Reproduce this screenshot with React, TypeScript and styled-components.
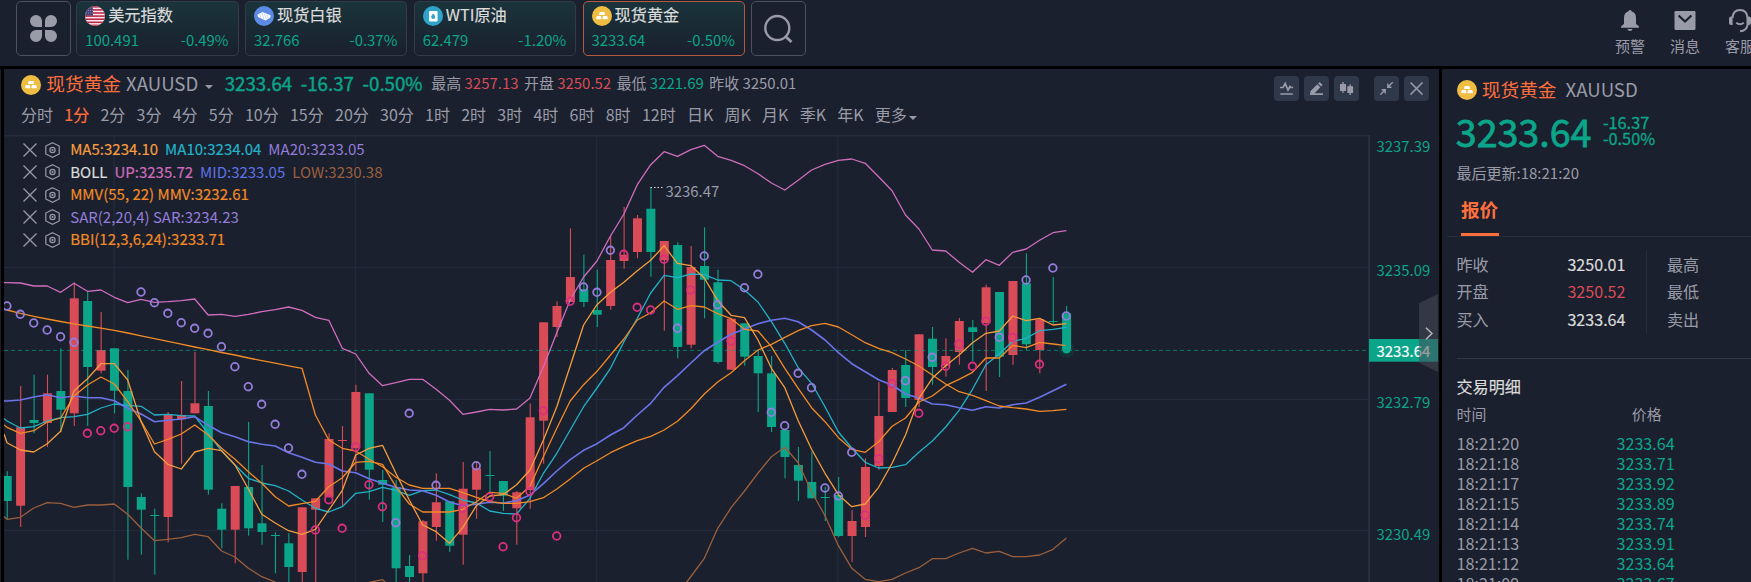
import React from 'react';
import styled, { createGlobalStyle, css } from 'styled-components';

const c = {
  bg: '#1a202d',
  text: '#9a9ba8',
  white: '#dcdcdc',
  green: '#0ba58a',
  red: '#d94b57',
  accent: '#ff6f3d',
  grid: '#222b3b',
};

const semibold = css`
  font-weight: 400;
  -webkit-text-stroke: 0.18px currentColor;
`;

const GlobalStyle = createGlobalStyle`
  *, *::before, *::after { box-sizing: border-box; }
  html, body { margin: 0; padding: 0; background: #000; overflow: hidden; }
  body {
    font-family: "Noto Sans CJK SC", "Noto Sans", sans-serif;
    font-size: 15px;
    color: ${c.text};
  }
`;

type Tone = 'green' | 'red' | 'white' | 'text' | 'accent';

const Page = styled.div`
  width: 1751px;
  height: 582px;
  display: flex;
  flex-direction: column;
  gap: 3px;
  overflow: hidden;
  background: #000;
`;

const TopBar = styled.header`
  height: 66px;
  flex: none;
  background: ${c.bg};
  display: flex;
  align-items: flex-start;
  padding: 1px 0 0 16px;
`;

const SquareButton = styled.button`
  width: 55px;
  height: 55px;
  flex: none;
  padding: 0;
  display: grid;
  place-items: center;
  border: 1px solid #4c515f;
  border-radius: 5px;
  background: transparent;
  color: ${c.text};
`;

const QuoteList = styled.div`
  display: flex;
  gap: 6.4px;
  margin: 0 6px 0 5.2px;
`;

const QuoteCard = styled.div<{ $active?: boolean }>`
  width: 162.4px;
  height: 55px;
  padding: 0 9px 0 8px;
  border: 1px solid ${(p) => (p.$active ? '#b25b3f' : '#333b48')};
  border-radius: 5px;
  background: linear-gradient(#1a343b, #1a202d);
`;

const CardHead = styled.div`
  height: 24px;
  display: flex;
  align-items: center;
  gap: 3px;
  font-size: 16.2px;
  line-height: 24px;
  color: ${c.white};
  ${semibold}
  svg { margin-top: 4px; }
`;

const CardFoot = styled.div`
  display: flex;
  justify-content: space-between;
  font-size: 14.9px;
  line-height: 22px;
  margin-top: 3px;
  color: ${c.green};
`;

const TopActions = styled.nav`
  display: flex;
  margin-left: auto;
  margin-right: -4px;
  gap: 25px;
  padding-top: 8px;
`;

const TopAction = styled.div`
  width: 30px;
  display: flex;
  flex-direction: column;
  align-items: center;
  font-size: 15px;
  line-height: 22px;
  white-space: nowrap;
  svg { display: block; height: 24px; margin-bottom: 2px; overflow: visible; }
`;

const Body = styled.main`
  flex: 1;
  min-height: 0;
  display: flex;
  gap: 3px;
`;

const EdgeStrip = styled.div`
  width: 1px;
  background: ${c.bg};
`;

const ChartPanel = styled.section`
  width: 1435px;
  flex: none;
  background: ${c.bg};
  display: flex;
  flex-direction: column;
`;

const TitleRow = styled.div`
  height: 27px;
  flex: none;
  padding: 0 10px 0 17px;
  display: flex;
  align-items: center;
  white-space: nowrap;
  & > svg { flex: none; margin-top: 5px; }
`;

const SymbolName = styled.span`
  font-size: 18.7px;
  line-height: 28px;
  color: ${c.accent};
  margin-left: 5.3px;
`;

const SymbolCode = styled.span<{ $gap: number }>`
  font-size: 18.6px;
  line-height: 28px;
  margin-left: ${(p) => p.$gap}px;
`;

const Caret = styled.i<{ $gap: number; $drop: number }>`
  display: inline-block;
  vertical-align: middle;
  margin: ${(p) => p.$drop}px 0 0 ${(p) => p.$gap}px;
  border: 4px solid transparent;
  border-top-color: currentColor;
  border-bottom: 0;
`;

const LastPrice = styled.span`
  display: flex;
  gap: 8.6px;
  margin-left: 12px;
  font-size: 18.7px;
  line-height: 28px;
  color: ${c.green};
  font-weight: 400;
  -webkit-text-stroke: 0.4px currentColor;
`;

const StatLine = styled.span`
  display: flex;
  gap: 5.5px;
  margin-left: 8.8px;
  padding-top: 1px;
  font-size: 14.95px;
  line-height: 28px;
`;

const Num = styled.span<{ $tone: Tone }>`
  color: ${(p) => c[p.$tone]};
`;

const Tools = styled.div`
  display: flex;
  gap: 5px;
  margin-left: auto;
  padding-top: 12px;
`;

const ToolButton = styled.button<{ $apart?: boolean }>`
  width: 25px;
  height: 25px;
  padding: 0;
  border: 0;
  border-radius: 4px;
  background: #2f394a;
  color: ${c.text};
  display: grid;
  place-items: center;
  margin-left: ${(p) => (p.$apart ? 10 : 0)}px;
`;

const Periods = styled.div`
  height: 39px;
  flex: none;
  display: flex;
  align-items: center;
  gap: 11.25px;
  padding: 0 0 3px 17px;
  font-size: 16px;
  line-height: 24px;
  white-space: nowrap;
`;

const Period = styled.span<{ $active?: boolean }>`
  color: ${(p) => (p.$active ? c.accent : c.text)};
  ${(p) => p.$active && semibold}
`;

const ChartArea = styled.div`
  position: relative;
  flex: 1;
  min-height: 0;
  overflow: hidden;
  & > svg { display: block; }
`;

const Legend = styled.div`
  position: absolute;
  left: 19px;
  top: 3px;
  display: flex;
  flex-direction: column;
`;

const LegendRow = styled.div`
  height: 22.5px;
  display: flex;
  align-items: center;
  font-size: 15px;
  line-height: 22px;
  white-space: pre;
  svg { flex: none; margin-top: 1px; }
  svg + svg { margin-left: 8px; margin-right: 10.2px; }
`;

const LegendItem = styled.span<{ $color: string; $strong?: boolean }>`
  color: ${(p) => p.$color};
  ${(p) => p.$strong && semibold}
  margin-right: 7px;
`;

const CollapseHandle = styled.div`
  position: absolute;
  right: 1px;
  top: 159px;
  width: 19px;
  height: 78px;
  display: grid;
  place-items: center;
  background: rgba(72, 76, 89, 0.55);
  clip-path: polygon(0 12%, 100% 0, 100% 100%, 0 88%);
  color: #b5b7c0;
`;

const SidePanel = styled.aside`
  flex: 1;
  min-width: 0;
  overflow: hidden;
  background: ${c.bg};
  display: flex;
  flex-direction: column;
  white-space: nowrap;
`;

const SideTitle = styled.div`
  display: flex;
  align-items: center;
  height: 30px;
  padding-left: 14.5px;
  margin-top: 6px;
  svg { margin-top: 2px; }
`;

const SidePrice = styled.div`
  display: flex;
  align-items: center;
  height: 48px;
  margin-top: 4px;
  padding-left: 13.8px;
  color: ${c.green};
  font-size: 37.6px;
  line-height: 48px;
  font-weight: 400;
  -webkit-text-stroke: 0.8px currentColor;
`;

const SideChange = styled.div`
  display: flex;
  flex-direction: column;
  margin: 0 0 3px 11.5px;
  font-size: 16.3px;
  line-height: 16px;
  font-weight: 400;
  -webkit-text-stroke: 0.3px currentColor;
`;

const Updated = styled.div`
  font-size: 15px;
  line-height: 24px;
  padding-left: 14.5px;
  margin-top: 6px;
`;

const TabBar = styled.div`
  margin: 8px 0 0 5px;
  height: 44px;
  padding-left: 14px;
  border-bottom: 1px solid #272e3b;
`;

const Tab = styled.div`
  width: 38px;
  height: 43px;
  font-size: 18.6px;
  font-weight: 700;
  line-height: 31px;
  color: ${c.accent};
  border-bottom: 3px solid ${c.accent};
`;

const Facts = styled.div`
  display: flex;
  margin: 14px 0 25px 14.5px;
  height: 83px;
  font-size: 16.1px;
`;

const FactColumn = styled.div<{ $divided?: boolean }>`
  width: ${(p) => (p.$divided ? 190 : 180)}px;
  flex: none;
  padding: 0 20px 0 0;
  border-right: ${(p) => (p.$divided ? '1.5px solid #272e3b' : '0')};
  margin-right: 20.5px;
`;

const Fact = styled.div`
  display: flex;
  justify-content: space-between;
  height: 27.4px;
  line-height: 27.4px;
`;

const FactValue = styled.span<{ $tone: Tone }>`
  color: ${(p) => c[p.$tone]};
  ${(p) => p.$tone === 'white' && semibold}
`;

const Trades = styled.div`
  flex: 1;
  margin-left: 14.5px;
  border-top: 1px solid #2f394a;
`;

const TradesTitle = styled.h3`
  margin: 14px 0 0;
  font-size: 16.1px;
  line-height: 26px;
  color: ${c.white};
  ${semibold}
`;

const TradeHead = styled.div`
  display: flex;
  font-size: 14.9px;
  line-height: 26px;
  margin: 2px 0 6px;
  span:last-child { margin-left: 145.5px; }
`;

const TradeRow = styled.div`
  display: grid;
  grid-template-columns: 160px 1fr;
  height: 20px;
  line-height: 20px;
  font-size: 16.15px;
`;

/* ---------- icons ---------- */

const GoldIcon = () => (
  <svg width="20" height="20" viewBox="0 0 20 20">
    <circle cx="10" cy="10" r="10" fill="#efbd42" />
    <path
      d="M8.3 6h3.6q.6 0 .7.5l.4 1.9q.1.7-.6.7H7.7q-.7 0-.6-.7l.4-1.9q.1-.5.8-.5zM5.3 10h3q.6 0 .7.5l.4 2.1q.1.7-.6.7H4.7q-.6 0-.5-.7l.4-2.1q.1-.5.7-.5zM11.5 10h3.2q.6 0 .7.5l.4 2.1q.1.7-.6.7h-4.3q-.6 0-.5-.7l.4-2.1q.1-.5.7-.5z"
      fill="#fff"
    />
  </svg>
);

const SilverIcon = () => (
  <svg width="20" height="20" viewBox="0 0 20 20">
    <circle cx="10" cy="10" r="10" fill="#5c8ae4" />
    <path d="M3.500 8.500 8.500 6l8 3.200-.3 2.600L11.500 14.500 4 11z" fill="#fff" />
    <path d="m5.500 8 1.500 4M8 7l2 6.500M10.500 7.500l2 6M13 8.500l1.500 4" stroke="#9dbaf0" strokeWidth=".6" fill="none" />
  </svg>
);

const OilIcon = () => (
  <svg width="20" height="20" viewBox="0 0 20 20">
    <circle cx="10" cy="10" r="10" fill="#2fa3c9" />
    <rect x="6" y="5" width="8.6" height="10.6" rx="1" fill="#fff" />
    <path d="M10.200 7.500q2 2.300 2 3.600a2 2 0 0 1-4 0q0-1.300 2-3.600z" fill="#2fa3c9" />
  </svg>
);

const FlagIcon = () => (
  <svg width="20" height="20" viewBox="0 0 20 20">
    <defs>
      <clipPath id="flagClip">
        <circle cx="10" cy="10" r="10" />
      </clipPath>
    </defs>
    <g clipPath="url(#flagClip)">
      <rect width="20" height="20" fill="#f3e9ee" />
      {[0, 3.1, 6.2, 9.3, 12.4, 15.5, 18.6].map((y) => (
        <rect key={y} y={y} width="20" height="1.6" fill="#c22846" />
      ))}
      <rect width="8" height="9.6" fill="#474478" />
      {[2, 4.5, 7].map((y) => (
        <path key={y} d={`M1 ${y}h7`} stroke="#9a99bd" strokeWidth=".7" strokeDasharray="1 1" />
      ))}
    </g>
  </svg>
);

const CloverIcon = () => (
  <svg width="27" height="27" viewBox="0 0 27 27" fill="currentColor">
    <path d="M6 0a6 6 0 0 1 6 6v6H6A6 6 0 0 1 6 0zM21 0a6 6 0 0 1 0 12h-6V6a6 6 0 0 1 6-6zM6 15h6v6a6 6 0 1 1-6-6zM15 15h6a6 6 0 1 1-6 6z" />
  </svg>
);

const SearchIcon = () => (
  <svg width="30" height="30" viewBox="0 0 30 30" fill="none" stroke="currentColor" strokeWidth="2.4">
    <circle cx="14.300" cy="14" r="12" />
    <path d="m22 22 6.500 6" strokeWidth="2.800" />
  </svg>
);

const BellIcon = () => (
  <svg width="20" height="24" viewBox="0 0 20 24" fill="currentColor">
    <path d="M10 1q1.200 0 1.500 1.300Q16 3.600 16 9v6l2.900 2.300V18.700H1.100V17.300L4 15V9q0-5.400 4.500-6.700Q8.800 1 10 1zM7.400 20h5.200q-.5 2-2.600 2t-2.600-2z" />
  </svg>
);

const MailIcon = () => (
  <svg width="22" height="24" viewBox="0 0 22 24">
    <rect x=".5" y="2" width="21" height="19" rx="1.200" fill="currentColor" />
    <path d="m4.600 6.500 6.400 6 6.400-6" stroke={c.bg} strokeWidth="2.200" fill="none" />
  </svg>
);

const HeadsetIcon = () => (
  <svg width="24" height="24" viewBox="0 0 24 24" fill="none" stroke="currentColor" strokeWidth="2">
    <path d="M4.500 9Q5 1 12 1t7.500 8v7q-1 6-7.500 6.300" />
    <path d="M4.600 7.500v8.600H3A2.200 2.200 0 0 1 1 14V9.600a2 2 0 0 1 2-2zM19.500 7.500v8.600H21a2.200 2.200 0 0 0 2-2.100V9.600a2 2 0 0 0-2-2z" fill="currentColor" stroke="none" />
    <path d="M8.300 13.800q3.700 3 7.500 0" />
  </svg>
);

const PulseToolIcon = () => (
  <svg width="15" height="15" viewBox="0 0 15 15" fill="none" stroke="currentColor" strokeWidth="1.700">
    <path d="M1 6.500h3L6.200 2.500 9 9l2-3.500 1 1h2M1.300 13h12.500" />
  </svg>
);

const PencilToolIcon = () => (
  <svg width="15" height="15" viewBox="0 0 15 15" fill="currentColor">
    <path d="M1 13.200 1.600 10 8.300 3.300l3 3L5.700 12.300H14V14H1zM9.100 2.500 10.700.900l3 3-1.600 1.600z" />
  </svg>
);

const CandleToolIcon = () => (
  <svg width="15" height="15" viewBox="0 0 15 15" fill="currentColor">
    <path d="M1 3h2.300V1h1.400v2H7v7H4.700v1.800H3.300V10H1zM8.300 5.300h2.200V3.500h1.400v1.800h2.200v6.600h-2.200v2h-1.400v-2H8.300z" />
  </svg>
);

const ShrinkToolIcon = () => (
  <svg width="15" height="15" viewBox="0 0 15 15" fill="none" stroke="currentColor" strokeWidth="1.400">
    <path d="M13.700 1.300 9 6M8.800 2.600v3.600h3.600M1.300 13.700 6 9M6.200 12.400V8.800H2.600" />
  </svg>
);

const CloseIcon = ({ size = 14, weight = 1.3 }: { size?: number; weight?: number }) => (
  <svg width={size} height={size} viewBox="0 0 14 14" fill="none" stroke="currentColor" strokeWidth={weight}>
    <path d="M.500.500l13 13M13.500.500l-13 13" />
  </svg>
);

const HexIcon = () => (
  <svg width="15" height="16" viewBox="0 0 15 16" fill="none" stroke="currentColor" strokeWidth="1.200">
    <path d="M7.500.700 14.200 4v8l-6.700 3.300L.800 12V4z" />
    <circle cx="7.500" cy="8" r="2.600" />
    <circle cx="7.500" cy="8" r=".5" />
  </svg>
);

/* ---------- chart data ---------- */

const STEP = 13.41;
const X0 = 7.2;
const xAt = (i: number) => X0 + STEP * i;

// [direction (1 rise, 0 fall), high, body top, body bottom, low]
const candles: number[][] = [
  [0, 471.3, 476, 501, 519], [1, 386, 427.3, 505.7, 527], [0, 374.7, 420, 423, 433.3], [1, 374.7, 393.3, 423, 447],
  [0, 348.3, 391, 409.7, 432.3], [1, 282.3, 298.3, 413.3, 426], [0, 291.7, 301, 367, 426], [1, 312, 350, 370.7, 373.3],
  [0, 348.3, 348.3, 390.7, 413.3], [0, 370, 391, 487, 559.7], [0, 493.3, 497, 509.7, 554.7], [0, 508.7, 515, 516, 574.7],
  [1, 412, 414, 517, 542.3], [1, 381, 415, 419.3, 463.7], [1, 352, 403.3, 413.3, 413.3], [0, 391, 406, 489.7, 494.7],
  [0, 503.3, 508.7, 529.7, 548.3], [1, 486, 486, 529.7, 563.3], [0, 422, 487, 528.3, 535.7], [0, 465, 523.3, 532, 544.7],
  [0, 532.3, 535, 536, 573.3], [0, 533, 543.3, 567, 585], [1, 507.3, 507.3, 572, 585], [1, 498.3, 498.3, 509.7, 585],
  [1, 433.3, 439, 497.3, 497.3], [1, 426, 440, 441, 505.7], [1, 384.7, 392, 448.3, 471], [0, 393.3, 393.3, 469.7, 499.7],
  [0, 470, 480, 484.7, 522], [0, 480, 487.3, 568.3, 585], [0, 555, 566, 577, 585], [1, 520, 521.3, 573.3, 585],
  [1, 473.3, 502.3, 527, 540.7], [0, 501.3, 501.3, 545.7, 552], [1, 462, 488.7, 534.7, 564.7], [1, 462, 468.3, 489.7, 518.7],
  [0, 451, 475, 476, 493.3], [0, 481, 481, 495.7, 511], [1, 491, 492.3, 508.3, 544.7], [1, 403.3, 417.3, 490, 508.7],
  [1, 322.3, 322.3, 420.7, 463.7], [1, 301.3, 306, 327, 337], [1, 228.3, 277, 302, 302], [0, 254.7, 289.3, 302, 307],
  [0, 269.7, 310, 314.7, 327], [1, 235.3, 260, 306, 309.7], [1, 207, 254.7, 261, 268.7], [1, 215, 218.3, 252, 258.3],
  [0, 187.3, 208.7, 252, 276.7], [1, 241, 241, 260.3, 330.7], [0, 242.3, 245, 347, 358.3], [1, 246, 267, 344.7, 348.3],
  [0, 227.3, 266, 279.7, 318.3], [0, 269.7, 282.3, 362, 363.7], [1, 318.7, 318.7, 369.7, 369.7], [0, 323.3, 323.3, 356.7, 365.7],
  [0, 350, 356, 373.3, 412], [0, 356, 373.3, 427, 432], [0, 430, 430, 457, 478.3], [0, 447, 465, 480.7, 501],
  [0, 451.7, 482, 498.3, 498.3], [0, 486.7, 497, 498, 521], [0, 477, 495, 536, 537.3], [1, 510, 521, 536, 562],
  [1, 458.3, 467, 527, 537], [1, 382, 416, 466, 469.7], [1, 368, 370, 412, 412], [0, 350, 365, 398, 407],
  [1, 334.3, 334.3, 400, 407], [0, 327, 338.7, 367, 384.7], [1, 338.3, 356, 365.7, 376.7], [1, 318, 321, 352, 364.7],
  [0, 320, 327.3, 332, 361], [1, 284.7, 287.3, 323, 391], [0, 292, 292, 356.7, 377], [1, 281, 281, 355, 364.7],
  [0, 253.3, 283.3, 344.3, 350], [1, 319.3, 319.3, 350, 373.3], [0, 277, 321, 322, 324], [0, 306, 313.3, 350, 350],
];

const upper = [
  282.7, 283, 286, 286, 292.3, 283.3, 291.3, 290, 297.3, 302.7, 299.3, 302.3, 301.7, 300.7, 299, 315, 314.3, 316.3, 314.3, 311.7,
  309.7, 307, 310.3, 317.3, 320.3, 348.3, 354, 373.3, 385.7, 382.7, 379.3, 379.3, 389.3, 400.3, 414.3, 412, 409.3, 410, 409, 398,
  366.7, 332.7, 300, 277, 261, 236, 214, 184.7, 164.7, 151.7, 156.3, 149.7, 145.3, 156.3, 160.3, 165.7, 173.7, 183, 190, 180.3,
  170, 164.3, 160.3, 159, 163.3, 176.7, 190.7, 215, 229, 250, 251, 262.3, 272.3, 259.7, 265.3, 252.3, 249, 240.3, 232.7, 230.7,
];

const middle = [
  401, 400, 397, 394.7, 397.7, 396, 397.7, 397.7, 400.7, 408.3, 414, 421.7, 420.3, 419, 416.7, 425.3, 432.7, 436.7, 441.7, 444.3,
  446, 452.7, 457.3, 462.3, 464, 471, 472.7, 478.7, 483.3, 487.3, 490, 490.7, 495.3, 502, 505.7, 504.3, 502.3, 503, 500.7, 495,
  483.7, 471, 459.7, 450.3, 443.7, 435, 427.7, 415, 403.3, 387.3, 375.7, 363, 350.7, 342.3, 334.3, 329, 323.7, 320.3, 318.3, 321.7,
  330, 340, 352.7, 363.7, 371.7, 379.7, 385, 394, 398, 404, 404.7, 407.7, 410.3, 406.7, 408, 404.7, 403, 397.3, 390.7, 384.3,
];

const lower = [
  519.3, 517.3, 508, 502.7, 503.3, 507.3, 505, 505, 504, 514.3, 528, 540.7, 539.3, 537.7, 534.3, 536.7, 551, 557, 568.3, 576.7,
  582, 590, 600, 600, 600, 600, 595, 582.5, 579.7, 592, 610, 610, 610, 610, 610, 610, 610, 610, 610, 610,
  610, 610, 610, 610, 610, 610, 610, 610, 610, 610, 594, 576.5, 558.3, 528.3, 507.7, 491, 473, 456.7, 447.3, 462.7,
  491.7, 515.7, 545.7, 568.3, 579.3, 581.7, 579.3, 573, 567.7, 558.7, 558.7, 553, 548.3, 553, 551.3, 556.7, 556.7, 555, 549.3, 538,
];

const ma10 = [
  421, 428, 426.7, 421, 417.7, 416.7, 414.3, 408, 404, 405.3, 406.3, 415, 414.3, 415.7, 416, 433.3, 451, 465, 478.3, 483,
  485.7, 491, 500, 508.3, 512, 506.7, 493.3, 491.7, 487.3, 490.3, 495.3, 490.7, 490, 494.7, 500, 503, 511, 513.3, 514, 498.3,
  473.3, 453.3, 430, 406.7, 388, 368.3, 341.7, 318.3, 293, 275.3, 277.7, 274, 274.7, 280, 280.7, 290, 302, 321.7, 343.3, 367.7,
  383.3, 406.7, 432, 448, 462.3, 468, 467.3, 464.7, 452.3, 441, 427, 410.3, 389.3, 364.7, 354, 341.3, 338.3, 330.7, 329.3, 327.3,
];

const ma5 = [
  442.7, 450, 452, 443.7, 431.3, 390.7, 378.7, 363.7, 363.7, 380, 421.7, 451.7, 464.3, 469, 452, 448.3, 450.7, 465, 489, 514.3,
  523, 530.7, 534.3, 529.3, 510, 490.3, 455, 448.3, 445.3, 473.3, 500, 525, 531.7, 543.3, 527.3, 505.7, 496, 494.7, 484.7, 470,
  440, 406.7, 366, 325, 304.7, 292.3, 282.3, 270.7, 260.3, 245.7, 263.3, 265.7, 278, 300.7, 315.3, 317.7, 340, 368.3, 387.7, 420.7,
  449.3, 473.3, 494.7, 506.7, 504, 487.3, 463.3, 435, 398.3, 378.3, 365.7, 355, 342.7, 333.3, 331, 316, 320.7, 318.3, 325, 323.7,
];

const bbi = [
  427.3, 433.3, 430.7, 422, 418, 396, 385, 377, 384, 401.7, 421, 444, 439.3, 434, 425, 435, 448.3, 459.3, 471.7, 483.3,
  496.7, 506, 503.7, 501.3, 486.7, 477.7, 462.3, 461.3, 464.3, 486.7, 504, 512, 512, 512, 509.3, 501.7, 492.3, 493.3, 498.3, 486.3,
  456.7, 428.3, 401, 384.7, 371.3, 355, 339, 320, 312.7, 301, 309.3, 305.7, 307, 313.7, 318.7, 329.3, 331, 346.7, 368.3, 388.3,
  407.7, 421.7, 437.7, 449.3, 452.3, 441.7, 426.3, 418, 402, 396, 385.7, 379.3, 372.3, 358, 358, 345.3, 347.7, 342.3, 344, 345.7,
];

const mmv = [
  310, 313.3, 316.3, 319, 321.5, 323.8, 326, 328.2, 330.3, 333, 335.8, 338.6, 341.4, 344.2, 347, 349.7, 352.5, 355, 358, 360.6,
  363.2, 365.8, 368.3, 415, 440, 448.3, 451, 459.3, 466.7, 477.3, 485, 488.3, 488.3, 488.3, 492.7, 497.3, 501.7, 503.3, 503.3, 501.7,
  497.7, 489, 479, 468.3, 460.7, 452.7, 446.3, 440.7, 436.3, 430, 421.3, 408.7, 394, 382, 372.7, 360.7, 350, 344.3, 337.3, 330.7,
  325.7, 323.3, 327, 334.7, 342.7, 348.3, 352.7, 359, 366, 375, 384, 391.7, 395.3, 400.7, 406, 407.7, 409, 411.3, 410.7, 409.3,
];

const sarAbove: number[][] = [
  [0, 306], [1, 314.3], [2, 323], [3, 330], [4, 336.7], [5, 342.3], [10, 292], [11, 302.7], [12, 313.3], [13, 322.7], [14, 328.3],
  [15, 333.3], [16, 346.7], [17, 366.7], [18, 386.7], [19, 404.3], [20, 424.3], [21, 448], [22, 474.3], [29, 522.7], [30, 413.3],
  [32, 485.3], [35, 465.7], [43, 287], [44, 292.3], [45, 250.3], [50, 328.3], [52, 256], [53, 304.7], [55, 287.7], [56, 274.3],
  [57, 412.3], [58, 425.7], [59, 373.3], [60, 387.7], [61, 488], [62, 496], [63, 452.3], [67, 380.7], [69, 357.3], [74, 337.3],
  [76, 280], [78, 268], [79, 316],
];

const sarBelow: number[][] = [
  [6, 433.3], [7, 430.7], [8, 428.3], [9, 426.7], [23, 530], [24, 499.7], [25, 528.3], [26, 447], [27, 484.7], [28, 506.7],
  [31, 555.7], [34, 508.3], [36, 497], [37, 546.7], [38, 517.7], [39, 491.3], [40, 410.7], [41, 536], [42, 301.3], [46, 254.3],
  [47, 307.3], [48, 310], [49, 259.3], [51, 290], [54, 341], [64, 515], [65, 458.7], [66, 383.7], [68, 413.3], [70, 366.3],
  [71, 344], [72, 366.3], [73, 321.3], [75, 337.3], [77, 364.3],
];

const series = [
  { data: upper, color: '#cf6dbd', width: 1.3, lead: 282.7 },
  { data: lower, color: '#9b5f3d', width: 1.3, lead: 516.5 },
  { data: ma10, color: '#22b3c9', width: 1.3, lead: 418.5 },
  { data: middle, color: '#6c74ea', width: 1.6, lead: 401 },
  { data: mmv, color: '#f28a26', width: 1.3, lead: 309 },
  { data: bbi, color: '#f28a26', width: 1.3, lead: 425 },
  { data: ma5, color: '#f59d3e', width: 1.3, lead: 434 },
];

const axis = [
  { y: 147, label: '3237.39' },
  { y: 271, label: '3235.09' },
  { y: 403, label: '3232.79' },
  { y: 535, label: '3230.49' },
];

const Chart = () => (
  <svg width="1435" height="447" viewBox="4 135 1435 447" fontFamily='"Noto Sans CJK SC", sans-serif' fontSize="14.9">
    <g fill={c.grid}>
      <rect x="4" y="135" width="1366" height="1.600" />
      {[267, 399, 530].map((y) => (
        <rect key={y} x="4" y={y} width="1365" height="1" />
      ))}
      {[113.4, 354.6, 596, 837].map((x) => (
        <rect key={x} x={x} y="136" width="1.400" height="446" />
      ))}
      <rect x="1368" y="135" width="2" height="447" fill="#262f40" />
    </g>
    <g>
      {candles.map(([up, high, top, bottom, low], i) => (
        <g key={i} fill={up ? c.red : c.green}>
          <rect x={xAt(i) - 0.5} y={high} width="1.100" height={low - high} />
          <rect x={xAt(i) - 4.5} y={top} width="9" height={bottom - top} />
        </g>
      ))}
    </g>
    <path d="M4 350.400H1369" stroke={c.green} strokeOpacity=".65" strokeDasharray="4 3" />
    <g fill="none" strokeLinejoin="round">
      {series.map((s, k) => (
        <polyline
          key={k}
          stroke={s.color}
          strokeWidth={s.width}
          points={`4,${s.lead} ` + s.data.map((y, i) => `${(xAt(i) - 0.2).toFixed(1)},${y}`).join(' ')}
        />
      ))}
    </g>
    <g fill="none" strokeWidth="1.800">
      {sarAbove.map(([i, y]) => (
        <circle key={i} cx={xAt(i) - 0.3} cy={y} r="3.800" stroke="#957ddb" />
      ))}
      {sarBelow.map(([i, y]) => (
        <circle key={i} cx={xAt(i) - 0.3} cy={y} r="3.800" stroke="#dc2f80" />
      ))}
    </g>
    <circle cx="1066.500" cy="350" r="8" fill={c.green} opacity=".12" />
    <circle cx="1066.500" cy="349.500" r="4" fill={c.green} />
    <path d="M650.500 187.500h14" stroke="#dcdcdc" strokeDasharray="1.500 2" />
    <text x="665.500" y="197" fill={c.text}>3236.47</text>
    {axis.map((a) => (
      <text key={a.label} x="1376.500" y={a.y + 5.3} fill={c.green}>
        {a.label}
      </text>
    ))}
    <rect x="1369" y="339" width="69" height="22.700" fill={c.green} />
    <text x="1376.500" y="357" fill="#fff" stroke="#fff" strokeWidth=".2">3233.64</text>
  </svg>
);

/* ---------- page ---------- */

const quotes = [
  { name: '美元指数', price: '100.491', change: '-0.49%', icon: <FlagIcon /> },
  { name: '现货白银', price: '32.766', change: '-0.37%', icon: <SilverIcon /> },
  { name: 'WTI原油', price: '62.479', change: '-1.20%', icon: <OilIcon /> },
  { name: '现货黄金', price: '3233.64', change: '-0.50%', icon: <GoldIcon />, active: true },
];

const periods = [
  '分时', '1分', '2分', '3分', '4分', '5分', '10分', '15分', '20分', '30分', '1时', '2时', '3时', '4时', '6时', '8时', '12时',
  '日K', '周K', '月K', '季K', '年K',
];

const stats: { label: string; value: string; tone: Tone }[] = [
  { label: '最高', value: '3257.13', tone: 'red' },
  { label: '开盘', value: '3250.52', tone: 'red' },
  { label: '最低', value: '3221.69', tone: 'green' },
  { label: '昨收', value: '3250.01', tone: 'text' },
];

const legends: { text: string; color: string; strong?: boolean }[][] = [
  [
    { text: 'MA5:3234.10', color: '#f59d3e', strong: true },
    { text: 'MA10:3234.04', color: '#22b3c9', strong: true },
    { text: 'MA20:3233.05', color: '#957ddb' },
  ],
  [
    { text: 'BOLL', color: '#dcdcdc', strong: true },
    { text: 'UP:3235.72', color: '#cf6dbd', strong: true },
    { text: 'MID:3233.05', color: '#5f72e8' },
    { text: 'LOW:3230.38', color: '#9b5f3d' },
  ],
  [{ text: 'MMV(55, 22) MMV:3232.61', color: '#f28a26', strong: true }],
  [{ text: 'SAR(2,20,4) SAR:3234.23', color: '#957ddb' }],
  [{ text: 'BBI(12,3,6,24):3233.71', color: '#f28a26', strong: true }],
];

const facts: { label: string; value: string; tone: Tone }[] = [
  { label: '昨收', value: '3250.01', tone: 'white' },
  { label: '开盘', value: '3250.52', tone: 'red' },
  { label: '买入', value: '3233.64', tone: 'white' },
];

const trades = [
  ['18:21:20', '3233.64'],
  ['18:21:18', '3233.71'],
  ['18:21:17', '3233.92'],
  ['18:21:15', '3233.89'],
  ['18:21:14', '3233.74'],
  ['18:21:13', '3233.91'],
  ['18:21:12', '3233.64'],
  ['18:21:09', '3233.67'],
];

export default function App() {
  return (
    <Page>
      <GlobalStyle />
      <TopBar>
        <SquareButton aria-label="menu"><CloverIcon /></SquareButton>
        <QuoteList>
          {quotes.map((q) => (
            <QuoteCard key={q.name} $active={q.active}>
              <CardHead>{q.icon}<span>{q.name}</span></CardHead>
              <CardFoot><span>{q.price}</span><span>{q.change}</span></CardFoot>
            </QuoteCard>
          ))}
        </QuoteList>
        <SquareButton aria-label="search"><SearchIcon /></SquareButton>
        <TopActions>
          <TopAction><BellIcon />预警</TopAction>
          <TopAction><MailIcon />消息</TopAction>
          <TopAction><HeadsetIcon />客服</TopAction>
        </TopActions>
      </TopBar>
      <Body>
        <EdgeStrip />
        <ChartPanel>
          <TitleRow>
            <GoldIcon />
            <SymbolName>现货黄金</SymbolName>
            <SymbolCode $gap={5}>XAUUSD</SymbolCode>
            <Caret $gap={6.5} $drop={9} />
            <LastPrice>
              <span>3233.64</span>
              <span>-16.37</span>
              <span>-0.50%</span>
            </LastPrice>
            <StatLine>
              {stats.map((s) => (
                <span key={s.label}>{s.label} <Num $tone={s.tone}>{s.value}</Num></span>
              ))}
            </StatLine>
            <Tools>
              <ToolButton><PulseToolIcon /></ToolButton>
              <ToolButton><PencilToolIcon /></ToolButton>
              <ToolButton><CandleToolIcon /></ToolButton>
              <ToolButton $apart><ShrinkToolIcon /></ToolButton>
              <ToolButton><CloseIcon size={13} weight={1.7} /></ToolButton>
            </Tools>
          </TitleRow>
          <Periods>
            {periods.map((p) => (
              <Period key={p} $active={p === '1分'}>{p}</Period>
            ))}
            <Period>更多<Caret $gap={2} $drop={3} /></Period>
          </Periods>
          <ChartArea>
            <Chart />
            <Legend>
              {legends.map((row, i) => (
                <LegendRow key={i}>
                  <CloseIcon />
                  <HexIcon />
                  {row.map((item) => (
                    <LegendItem key={item.text} $color={item.color} $strong={item.strong}>{item.text}</LegendItem>
                  ))}
                </LegendRow>
              ))}
            </Legend>
            <CollapseHandle>
              <svg width="8" height="13" viewBox="0 0 8 13" fill="none" stroke="currentColor" strokeWidth="1.500">
                <path d="m1 .700 6 5.800-6 5.800" />
              </svg>
            </CollapseHandle>
          </ChartArea>
        </ChartPanel>
        <SidePanel>
          <SideTitle>
            <GoldIcon />
            <SymbolName>现货黄金</SymbolName>
            <SymbolCode $gap={9}>XAUUSD</SymbolCode>
          </SideTitle>
          <SidePrice>
            3233.64
            <SideChange><span>-16.37</span><span>-0.50%</span></SideChange>
          </SidePrice>
          <Updated>最后更新:18:21:20</Updated>
          <TabBar><Tab>报价</Tab></TabBar>
          <Facts>
            <FactColumn $divided>
              {facts.map((f) => (
                <Fact key={f.label}><span>{f.label}</span><FactValue $tone={f.tone}>{f.value}</FactValue></Fact>
              ))}
            </FactColumn>
            <FactColumn>
              {['最高', '最低', '卖出'].map((label) => (
                <Fact key={label}><span>{label}</span></Fact>
              ))}
            </FactColumn>
          </Facts>
          <Trades>
            <TradesTitle>交易明细</TradesTitle>
            <TradeHead><span>时间</span><span>价格</span></TradeHead>
            {trades.map(([time, price]) => (
              <TradeRow key={time}><span>{time}</span><Num $tone="green">{price}</Num></TradeRow>
            ))}
          </Trades>
        </SidePanel>
      </Body>
    </Page>
  );
}
